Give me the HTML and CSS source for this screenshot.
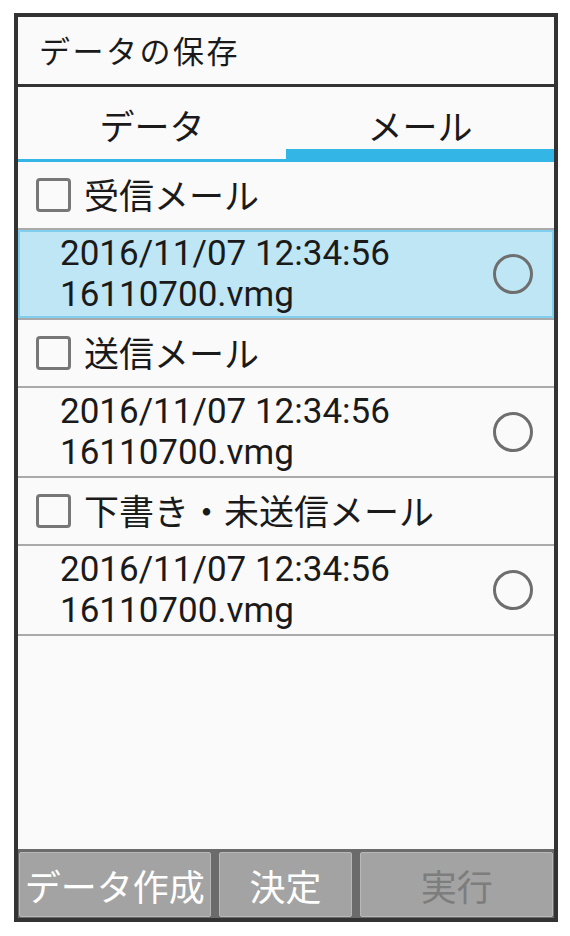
FILE: index.html
```html
<!DOCTYPE html>
<html>
<head>
  <meta charset="utf-8">
  <title>データの保存</title>
  <link rel="stylesheet" href="styles.css">
</head>
<body>
  <div class="frame">
    <div class="title">データの保存</div>

    <div class="tabs">
      <div class="tab">データ</div>
      <div class="tab active">メール</div>
    </div>

    <div class="list">
      <div class="group">
        <span class="check"></span>
        <span>受信メール</span>
      </div>
      <div class="item selected">
        <div class="item-text">
          <div>2016/11/07 12:34:56</div>
          <div>16110700.vmg</div>
        </div>
        <span class="radio"></span>
      </div>

      <div class="group">
        <span class="check"></span>
        <span>送信メール</span>
      </div>
      <div class="item">
        <div class="item-text">
          <div>2016/11/07 12:34:56</div>
          <div>16110700.vmg</div>
        </div>
        <span class="radio"></span>
      </div>

      <div class="group">
        <span class="check"></span>
        <span>下書き・未送信メール</span>
      </div>
      <div class="item">
        <div class="item-text">
          <div>2016/11/07 12:34:56</div>
          <div>16110700.vmg</div>
        </div>
        <span class="radio"></span>
      </div>
    </div>

    <div class="buttons">
      <div class="btn btn-wide">データ作成</div>
      <div class="btn btn-mid">決定</div>
      <div class="btn btn-wide disabled">実行</div>
    </div>
  </div>
</body>
</html>
```

FILE: styles.css
```css
body {
  margin: 0;
  background: #ffffff;
  font-family: Roboto, "Noto Sans CJK JP", sans-serif;
  color: #1a1a1a;
}

.frame {
  margin: 13px 0 0 14px;
  width: 536px;
  height: 901px;
  border: 4px solid #333333;
  display: flex;
  flex-direction: column;
  background: #fafafa;
}

.title {
  height: 70px;
  box-sizing: border-box;
  border-bottom: 3px solid #333333;
  display: flex;
  align-items: center;
  padding: 0 0 2px 21px;
  font-family: "Noto Sans CJK JP", sans-serif;
  font-size: 31px;
  letter-spacing: 2.5px;
}

.tabs {
  display: flex;
  height: 75px;
}

.tab {
  flex: 1;
  display: flex;
  align-items: center;
  justify-content: center;
  font-family: "Noto Sans CJK JP", sans-serif;
  font-size: 35px;
  box-shadow: inset 0 -3px #33b5e5;
}

.tab.active {
  box-shadow: inset 0 -13px #33b5e5;
}

.list {
  flex: 1;
}

.group {
  height: 68px;
  box-sizing: border-box;
  border-bottom: 2px solid #aaaaaa;
  display: flex;
  align-items: center;
  gap: 13px;
  padding: 0 0 3px 18px;
  font-family: "Noto Sans CJK JP", sans-serif;
  font-size: 35px;
}

.check {
  width: 29px;
  height: 28px;
  margin-top: 3px;
  border: 3.5px solid #777777;
  border-radius: 4px;
  flex: none;
}

.item {
  height: 88px;
  border-bottom: 2px solid #aaaaaa;
  display: flex;
  align-items: center;
  padding: 0 21px 0 42px;
}

.item.selected {
  background: #bee6f5;
  box-shadow: inset 0 0 0 2px #80cfee;
}

.item-text {
  flex: 1;
  font-size: 35px;
  line-height: 41px;
}

.radio {
  width: 34px;
  height: 34px;
  border: 3px solid #6e6e6e;
  border-radius: 50%;
  flex: none;
}

.buttons {
  height: 65px;
  background: #6b6b6b;
  padding: 3px 1px 1px 1px;
  display: flex;
  gap: 8px;
}

.btn {
  background: #a3a3a3;
  border: 1px solid #b8b8b8;
  border-radius: 2px;
  box-sizing: border-box;
  display: flex;
  align-items: center;
  justify-content: center;
  color: #ffffff;
  font-family: "Noto Sans CJK JP", sans-serif;
  font-size: 36px;
  white-space: nowrap;
}

.btn-wide {
  width: 192px;
}

.btn-mid {
  width: 134px;
}

.btn.disabled {
  width: 193px;
  color: #7d7d7d;
}
```
